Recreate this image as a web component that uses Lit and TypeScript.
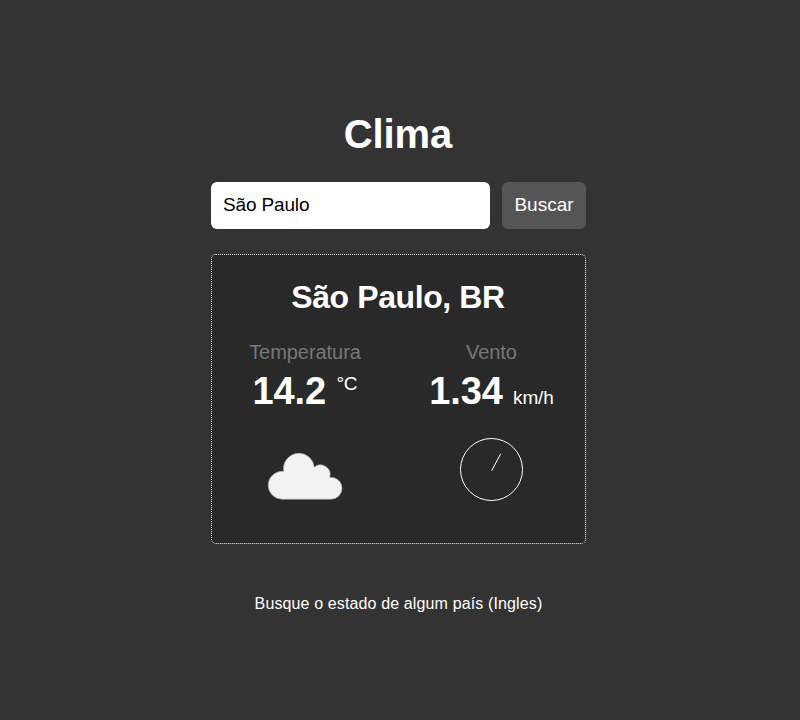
import { LitElement, html, css } from "lit";

class AppRoot extends LitElement {
  static styles = css`
    :host { display: block; box-sizing: border-box; height: 720px; padding: 110px 3px 0 0; background: #333; color: #fff; font-family: "Liberation Sans", Arial, sans-serif; }
    * { box-sizing: border-box; }
    .container { width: 375px; margin: 0 auto; text-align: center; }
    h1 { margin: 0 0 24px; padding-right: 1px; font-size: 40px; line-height: 48px; letter-spacing: -0.1px; }
    .search { display: flex; gap: 12px; }
    input { width: 279px; height: 47px; border: 0; border-radius: 6px; padding: 0 12px 2px; font: 19px "Liberation Sans", Arial, sans-serif; letter-spacing: -0.15px; color: #000; background: #fff; outline: 0; }
    button { flex: 1; height: 47px; border: 0; border-radius: 6px; padding: 0 0 2px; font: 19px "Liberation Sans", Arial, sans-serif; color: #fff; background: #555; }
    .card { margin-top: 25px; height: 290px; border: 1px dotted #fff; border-radius: 5px; background: #292929; padding-top: 24px; }
    h2 { margin: 0; padding-right: 1px; font-size: 32px; line-height: 37px; letter-spacing: -0.4px; }
    .info { display: grid; grid-template-columns: 186px 187px; margin-top: 24px; }
    .label { font-size: 20px; line-height: 24px; color: #777; letter-spacing: -0.05px; }
    .value { font-size: 38px; line-height: 44px; height: 44px; font-weight: bold; margin-top: 5px; letter-spacing: -0.15px; }
    .unit { font-size: 19px; font-weight: normal; }
    sup.unit { line-height: 0; }
    .graphic { display: flex; justify-content: center; height: 63px; margin-top: 25px; }
    .cloud { margin-top: 14px; }
    .note { margin: 50px 0 0; font-size: 16px; line-height: 20px; letter-spacing: 0.13px; }
  `;
  render() {
    return html`<main class="container">
      <h1>Clima</h1>
      <div class="search"><input value="São Paulo" /><button>Buscar</button></div>
      <section class="card">
        <h2>São Paulo, BR</h2>
        <div class="info">
          <div>
            <div class="label">Temperatura</div>
            <div class="value">14.2 <sup class="unit">°C</sup></div>
            <div class="graphic">
              <svg class="cloud" width="76" height="48" viewBox="0 0 76 48">
                <path d="M15 47.2A14 14 0 0 1 1.2 33.3A14 14 0 0 1 16.7 19.4A15.5 15.5 0 0 1 32 1.3A15.5 15.5 0 0 1 47.2 15.2A9.7 9.7 0 0 1 62.7 25.4A11 11 0 0 1 75 36.3A11 11 0 0 1 64 47.2Z" fill="#f2f2f2" stroke="#aaa" stroke-width=".7" />
              </svg>
            </div>
          </div>
          <div>
            <div class="label">Vento</div>
            <div class="value">1.34 <span class="unit">km/h</span></div>
            <div class="graphic">
              <svg width="63" height="63" viewBox="0 0 63 63" fill="none" stroke="#fff">
                <circle cx="31.5" cy="31.5" r="31" />
                <path d="M31.7 32.7L40.7 15.8" />
              </svg>
            </div>
          </div>
        </div>
      </section>
      <p class="note">Busque o estado de algum país (Ingles)</p>
    </main>`;
  }
}
customElements.define("app-root", AppRoot);
